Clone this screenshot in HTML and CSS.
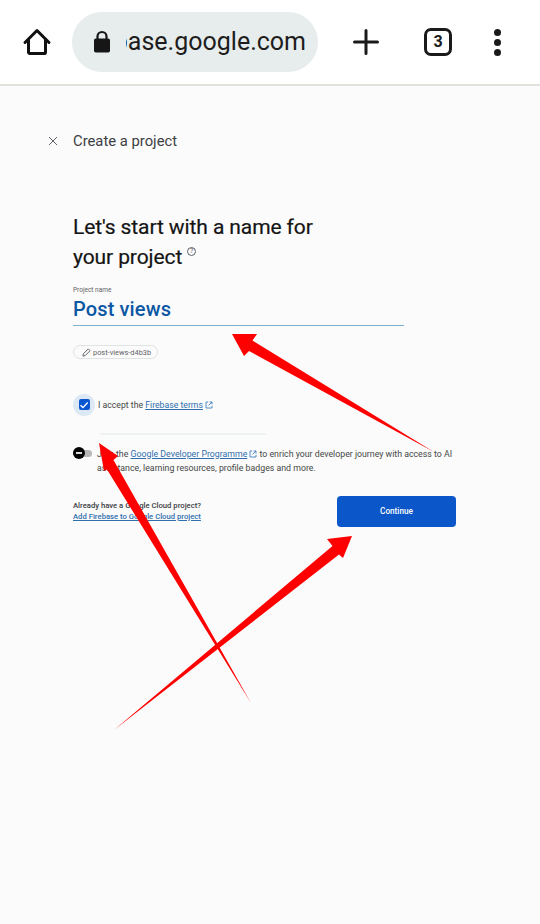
FILE: index.html
```html
<!DOCTYPE html>
<html lang="en">
<head>
<meta charset="utf-8">
<title>Create a project</title>
<link rel="stylesheet" href="styles.css">
</head>
<body>
<header class="toolbar">
  <svg class="home" width="30" height="30" viewBox="0 0 30 30"><path d="M3 15.500 15 3.500l12 12M6.500 13v12.200a1.300 1.300 0 0 0 1.300 1.300h14.400a1.300 1.300 0 0 0 1.300-1.300V13" fill="none" stroke="#111" stroke-width="3" stroke-linejoin="round" stroke-linecap="round"/></svg>
  <div class="omnibox">
    <svg class="lock" width="18" height="24" viewBox="0 0 18 24"><path d="M4.500 9V6.500a4.500 4.500 0 0 1 9 0V9" fill="none" stroke="#161616" stroke-width="2.200"/><rect x="1" y="8.500" width="16" height="14" rx="1.800" fill="#161616"/></svg>
    <div class="url"><span>firebase.google.com</span></div>
  </div>
  <svg class="plus" width="28" height="28" viewBox="0 0 28 28"><path d="M14 2.500v23M2.500 14h23" stroke="#1a1a1a" stroke-width="3" stroke-linecap="round"/></svg>
  <div class="tabs">3</div>
  <div class="dots"><i></i><i></i><i></i></div>
</header>
<main class="page">
  <div class="topline">
    <svg class="close" width="10" height="10" viewBox="0 0 10 10"><path d="M1 1l8 8M9 1l-8 8" stroke="#5f6368" stroke-width="1"/></svg>
    <span>Create a project</span>
  </div>
  <div class="content">
    <h1>Let's start with a name for<br>your project<sup class="help">?</sup></h1>
    <div class="field">
      <label>Project name</label>
      <div class="value">Post views</div>
    </div>
    <div class="chip">
      <svg width="9" height="9" viewBox="0 0 10 10"><path d="M1 9l.5-2.500L7 1l2 2-5.500 5.500z" fill="none" stroke="#5f6368" stroke-width="1.100"/></svg>
      <span>post-views-d4b3b</span>
    </div>
    <div class="terms">
      <div class="check-halo"><div class="check"><svg width="10" height="10" viewBox="0 0 10 10"><path d="M1.500 5.200 4 7.600 8.700 2.500" fill="none" stroke="#fff" stroke-width="1.400"/></svg></div></div>
      <span>I accept the <a>Firebase terms</a><svg class="ext" width="8" height="8" viewBox="0 0 8 8"><path d="M3.200 1H1v6h6V4.800M4.500 1H7v2.500M7 1 3.500 4.500" fill="none" stroke="#3f7fc0" stroke-width="0.900"/></svg></span>
    </div>
    <div class="faint-line"></div>
    <div class="programme">
      <div class="toggle"><div class="knob"><b></b></div></div>
      <p>Join the <a>Google Developer Programme</a><svg class="ext" width="8" height="8" viewBox="0 0 8 8"><path d="M3.200 1H1v6h6V4.800M4.500 1H7v2.500M7 1 3.500 4.500" fill="none" stroke="#3f7fc0" stroke-width="0.900"/></svg> to enrich your developer journey with access to AI assistance, learning resources, profile badges and more.</p>
    </div>
    <div class="actions">
      <div class="cloud">
        <strong>Already have a Google Cloud project?</strong>
        <a>Add Firebase to Google Cloud project</a>
      </div>
      <button class="continue">Continue</button>
    </div>
  </div>
</main>
<svg class="arrows" width="540" height="924" viewBox="0 0 540 924">
  <path d="M232 334 257 334 252.500 340.500 434 452 249 351 244 356Z"/>
  <path d="M99 443 118 456 113.500 460 251 703 107 469.500 104 471Z"/>
  <path d="M352 536 327 539 332.500 546 114 730 339 554.500 343 558Z"/>
</svg>
</body>
</html>
```
FILE: styles.css
```css
* { box-sizing: border-box; }
html, body { margin: 0; height: 100%; }
body {
  position: relative;
  width: 540px;
  height: 924px;
  overflow: hidden;
  background: #fbfbfb;
  font-family: Roboto, "Liberation Sans", sans-serif;
  color: #1f1f1f;
}
.toolbar {
  height: 86px;
  background: #fff;
  border-bottom: 2px solid #e0e3dc;
  display: flex;
  align-items: center;
  padding: 0 0 0 22px;
}
.home { flex: none; }
.omnibox {
  width: 246px;
  height: 60px;
  margin-left: 20px;
  border-radius: 30px;
  background: #e7ecec;
  display: flex;
  align-items: center;
  padding-left: 21px;
  flex: none;
}
.lock { flex: none; }
.url {
  width: 180px;
  margin-left: 15px;
  overflow: hidden;
  white-space: nowrap;
  display: flex;
  justify-content: flex-end;
  font-size: 25px;
  line-height: 32px;
  color: #1d1d1d;
  flex: none;
}
.url span { flex: none; }
.plus { margin-left: 34px; flex: none; }
.tabs {
  width: 28px;
  height: 28px;
  margin-left: 44px;
  border: 3px solid #1a1a1a;
  border-radius: 7px;
  font-size: 16px;
  font-weight: 700;
  line-height: 22px;
  text-align: center;
  color: #1a1a1a;
  flex: none;
}
.dots {
  margin-left: 42px;
  display: flex;
  flex-direction: column;
  gap: 3px;
  flex: none;
}
.dots i {
  display: block;
  width: 7px;
  height: 7px;
  border-radius: 50%;
  background: #1a1a1a;
}
.page { padding: 45px 0 0 48px; }
.topline {
  display: flex;
  align-items: center;
  height: 20px;
  font-size: 14.800px;
  color: #3c4043;
}
.close { margin-right: 15px; }
.content { padding: 0 0 0 25px; width: 409px; }
h1 {
  margin: 61px 0 0;
  font-size: 21px;
  font-weight: 400;
  line-height: 30px;
  letter-spacing: -0.100px;
  color: #141414;
  -webkit-text-stroke: 0.200px #141414;
}
.help {
  display: inline-block;
  width: 9px;
  height: 9px;
  margin-left: 5px;
  border: 1px solid #5f6368;
  border-radius: 50%;
  font-size: 7px;
  font-weight: 400;
  line-height: 7px;
  letter-spacing: 0;
  text-align: center;
  vertical-align: 11px;
  color: #5f6368;
  -webkit-text-stroke: 0;
}
.field {
  width: 331px;
  margin-top: 14px;
  border-bottom: 1px solid #7fb0cf;
  height: 40px;
}
.field label {
  display: block;
  font-size: 6.500px;
  line-height: 8px;
  color: #5f6368;
}
.value {
  font-size: 20px;
  line-height: 27px;
  font-weight: 500;
  letter-spacing: 0.130px;
  color: #0b57a4;
  margin-top: 2px;
}
.chip {
  display: inline-flex;
  align-items: center;
  gap: 2px;
  height: 14px;
  margin-top: 19px;
  padding: 0 6px 0 8px;
  border: 1px solid #dfe3e3;
  border-radius: 7px;
  font-size: 7.400px;
  color: #5f6368;
}
.terms {
  display: flex;
  align-items: center;
  margin-top: 33px;
  font-size: 8.700px;
  color: #444746;
}
.check-halo {
  width: 22px;
  height: 22px;
  margin-right: 3px;
  border-radius: 50%;
  background: #dce9f5;
  display: flex;
  align-items: center;
  justify-content: center;
}
.check {
  width: 11px;
  height: 11px;
  border-radius: 2px;
  background: #0b57d0;
  display: flex;
  align-items: center;
  justify-content: center;
}
a { color: #2f6fad; text-decoration: underline; }
.ext { margin-left: 2px; vertical-align: -1px; }
.faint-line {
  width: 166px;
  height: 2px;
  margin: 17px 0 0 27px;
  background: #eef3f0;
}
.programme {
  display: flex;
  margin-top: 12px;
  font-size: 8.770px;
  line-height: 14px;
  color: #444746;
}
.toggle {
  position: relative;
  width: 19px;
  height: 7px;
  margin: 3px 5px 0 0;
  border-radius: 4px;
  background: #b4b6b8;
  flex: none;
}
.knob {
  position: absolute;
  left: 0;
  top: -2.500px;
  width: 12px;
  height: 12px;
  border-radius: 50%;
  background: #050505;
  display: flex;
  align-items: center;
  justify-content: center;
}
.knob b { width: 6px; height: 1.500px; background: #ddd; }
.programme p { margin: 0; width: 360px; }
.actions {
  display: flex;
  justify-content: space-between;
  width: 383px;
  margin-top: 21px;
}
.cloud {
  display: flex;
  flex-direction: column;
  padding-top: 4px;
  font-size: 7.700px;
  line-height: 11px;
  font-weight: 500;
}
.cloud strong { font-weight: 500; color: #3c4043; }
.continue {
  width: 119px;
  height: 31px;
  border: 0;
  border-radius: 4px;
  background: #0b57c9;
  color: #fff;
  font-family: inherit;
  font-size: 8.200px;
  font-weight: 500;
}
.arrows {
  position: absolute;
  left: 0;
  top: 0;
  pointer-events: none;
}
.arrows path { fill: #ff0000; }
```
